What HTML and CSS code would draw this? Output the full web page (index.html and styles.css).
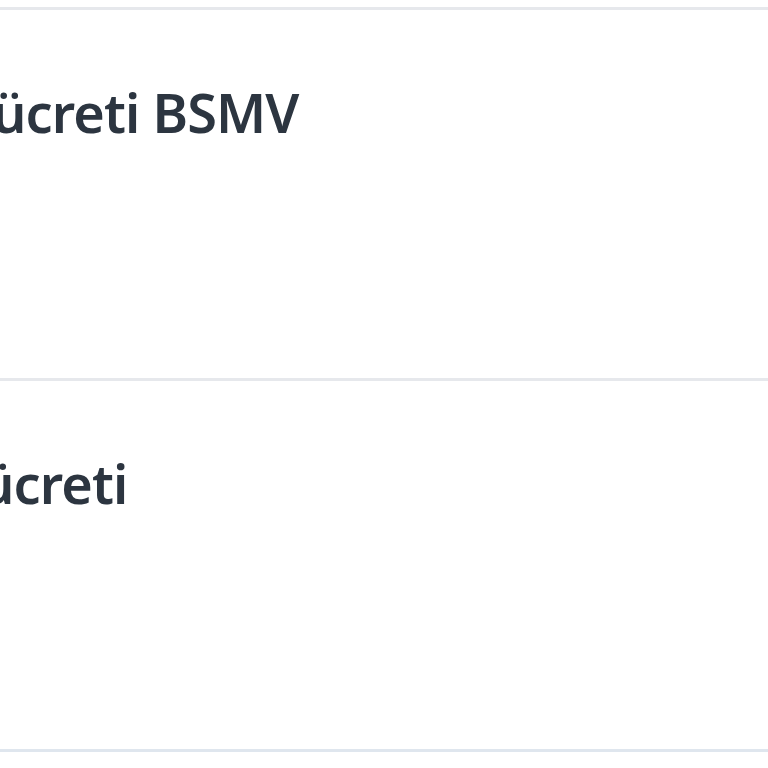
FILE: index.html
```html
<!DOCTYPE html>
<html lang="tr">
<head>
<meta charset="utf-8">
<title>Ücretler</title>
<link rel="stylesheet" href="styles.css">
</head>
<body>
<div class="table">
  <div class="row">
    <div class="cell cell-a">ücreti BSMV</div>
  </div>
  <div class="row">
    <div class="cell cell-b">ücreti</div>
  </div>
  <div class="row row-last"></div>
</div>
</body>
</html>
```
FILE: styles.css
```css
html, body {
  margin: 0;
  padding: 0;
  background: #ffffff;
}
body {
  overflow: hidden;
  width: 768px;
  height: 768px;
  font-family: "Noto Sans", "Open Sans", sans-serif;
  color: #2c3540;
}
.table {
  padding-top: 7px;
}
.row {
  height: 368px;
  border-top: 3px solid #e6e8ec;
  box-sizing: content-box;
}
.row-last {
  border-top-color: #dfe6ee;
  height: 20px;
}
.cell {
  font-size: 54px;
  font-weight: 600;
  letter-spacing: -0.9px;
  line-height: 1;
  white-space: nowrap;
  padding-top: 75px;
}
.cell-a {
  margin-left: -8px;
}
.cell-b {
  margin-left: -20px;
}
```
